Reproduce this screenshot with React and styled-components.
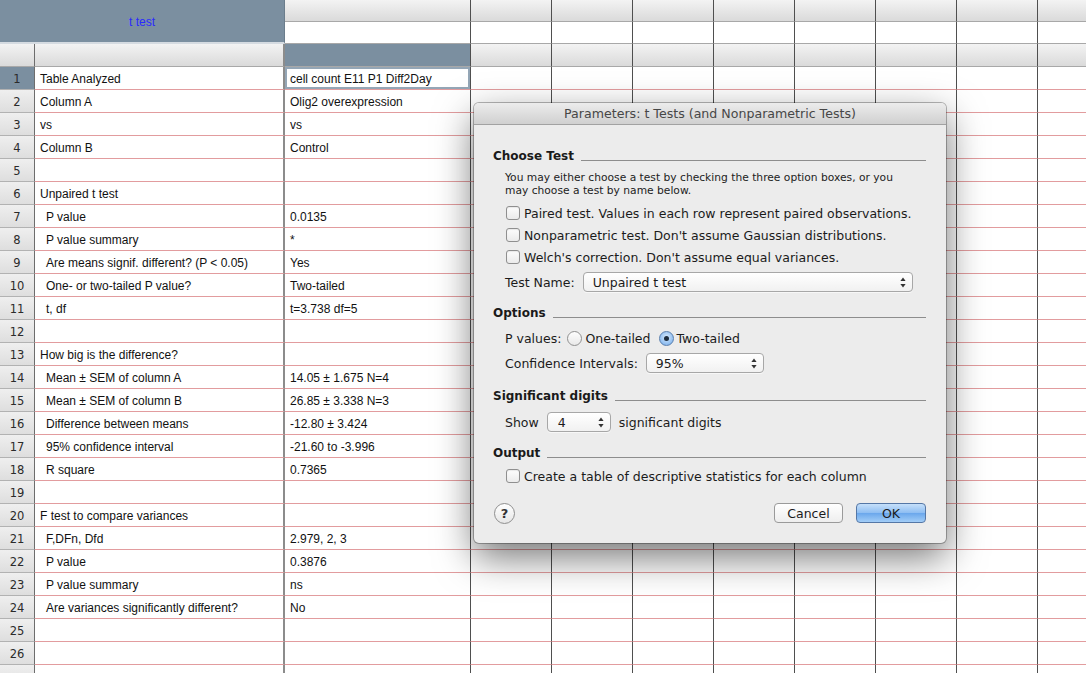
import React from 'react'
import styled, { createGlobalStyle } from 'styled-components'

const GlobalStyle = createGlobalStyle`
  html, body {
    margin: 0;
    padding: 0;
    background: #fff;
  }
  body {
    font-family: 'Liberation Sans', Arial, sans-serif;
  }
`

const results = [
  ['Table Analyzed', 'cell count E11 P1 Diff2Day'],
  ['Column A', 'Olig2 overexpression'],
  ['vs', 'vs'],
  ['Column B', 'Control'],
  ['', ''],
  ['Unpaired t test', ''],
  ['P value', '0.0135', true],
  ['P value summary', '*', true],
  ['Are means signif. different? (P < 0.05)', 'Yes', true],
  ['One- or two-tailed P value?', 'Two-tailed', true],
  ['t, df', 't=3.738 df=5', true],
  ['', ''],
  ['How big is the difference?', ''],
  ['Mean ± SEM of column A', '14.05 ± 1.675 N=4', true],
  ['Mean ± SEM of column B', '26.85 ± 3.338 N=3', true],
  ['Difference between means', '-12.80 ± 3.424', true],
  ['95% confidence interval', '-21.60 to -3.996', true],
  ['R square', '0.7365', true],
  ['', ''],
  ['F test to compare variances', ''],
  ['F,DFn, Dfd', '2.979, 2, 3', true],
  ['P value', '0.3876', true],
  ['P value summary', 'ns', true],
  ['Are variances significantly different?', 'No', true],
  ['', ''],
  ['', ''],
  ['', ''],
]

const EXTRA_COLS = 8
const VISIBLE_NUMBERS = 26
const slate = '#7b8fa0'
const grayHead = 'linear-gradient(#f3f3f3, #dadada)'

const colLine = (col) =>
  col === 0 ? '1px solid #6d6d6d' : col === 1 ? '2px solid #8c8c8c' : '1px solid #4f4f4f'

const Page = styled.div`
  position: relative;
  width: 1086px;
  height: 673px;
  overflow: hidden;
`

const Sheet = styled.div`
  display: grid;
  grid-template-columns: 35px 250px 186px repeat(${EXTRA_COLS}, 81px);
  grid-template-rows: 22px 22px 23px;
  grid-auto-rows: 23px;
  width: 1086px;
  height: 673px;
  overflow: hidden;
`

const TitleCell = styled.div`
  grid-column: 1 / span 2;
  grid-row: 1 / span 2;
  box-sizing: border-box;
  background: ${slate};
  border-bottom: 2px solid #d5dbe1;
  border-right: 1px solid #6b7d8c;
  display: flex;
  align-items: center;
  justify-content: center;
  padding-top: 2px;
  color: #2a2aff;
  font-size: 12px;
`

const HeadCell = styled.div`
  box-sizing: border-box;
  background: ${(p) => (p.$tone === 'white' ? '#fff' : p.$tone === 'slate' ? slate : grayHead)};
  border-right: ${(p) => colLine(p.$col)};
  border-bottom: 1px solid #a8a8a8;
`

const RowNum = styled.div`
  box-sizing: border-box;
  background: ${(p) => (p.$active ? slate : 'linear-gradient(#efefef, #dedede)')};
  border-right: ${colLine(0)};
  border-bottom: 1px solid #b2b2b2;
  display: flex;
  align-items: center;
  justify-content: center;
  font-family: 'DejaVu Sans', sans-serif;
  font-size: 11.5px;
  color: #2b2b2b;
  padding-top: 2px;
`

const Cell = styled.div`
  box-sizing: border-box;
  background: #fff;
  border-right: ${(p) => colLine(p.$col)};
  border-bottom: 1px solid #e29c9e;
  display: flex;
  align-items: center;
  padding-left: ${(p) => (p.$indent ? 11 : 5)}px;
  padding-top: 1px;
  font-size: 12px;
  color: #111;
  white-space: nowrap;
  overflow: hidden;
  box-shadow: ${(p) => (p.$selected ? 'inset 0 0 0 2px #94a6b6' : 'none')};
`

const Dialog = styled.div`
  position: absolute;
  left: 474px;
  top: 103px;
  width: 472px;
  height: 440px;
  box-sizing: border-box;
  background: #ececec;
  border-radius: 5px;
  box-shadow: 0 0 0 1px rgba(0, 0, 0, 0.28), 0 14px 38px rgba(0, 0, 0, 0.55);
  display: flex;
  flex-direction: column;
  overflow: hidden;
  font-family: 'DejaVu Sans', sans-serif;
  font-size: 12.5px;
  color: #1b1b1b;
`

const TitleBar = styled.div`
  flex: none;
  height: 21px;
  background: linear-gradient(#ececec, #d0d0d0);
  border-bottom: 1px solid #a2a2a2;
  display: flex;
  align-items: center;
  justify-content: center;
  color: #474747;
  font-size: 12.6px;
`

const Body = styled.div`
  display: flex;
  flex-direction: column;
  padding: 22px 20px 0 19px;
`

const SectionHead = styled.div`
  display: flex;
  align-items: center;
  gap: 7px;
  height: 18px;
  margin-top: ${(p) => p.$gap || 0}px;
  font-size: 12px;
  font-weight: bold;
  color: #1a1a1a;
  &::after {
    content: '';
    flex: 1;
    height: 1px;
    margin-top: 8px;
    background: #8d8d8d;
  }
`

const Note = styled.p`
  margin: 6px 0 0;
  padding-left: 12px;
  font-size: 10.7px;
  line-height: 13px;
  color: #222;
`

const Row = styled.div`
  display: flex;
  align-items: center;
  height: 22px;
  margin-top: ${(p) => p.$gap || 0}px;
  padding-left: 12px;
  gap: ${(p) => p.$spacing ?? 8}px;
`

const Check = styled.span`
  display: inline-block;
  width: 14px;
  height: 14px;
  box-sizing: border-box;
  border: 1px solid #8f8f8f;
  border-radius: 3px;
  background: linear-gradient(#fdfdfd, #ebebeb);
  box-shadow: inset 0 1px 1px rgba(0, 0, 0, 0.08);
`

const CheckLabel = styled.label`
  display: flex;
  align-items: center;
  gap: 4px;
  margin-left: 1px;
`

const Radio = styled.span`
  width: 15px;
  height: 15px;
  box-sizing: border-box;
  border-radius: 50%;
  border: 1px solid ${(p) => (p.$on ? '#5a7fae' : '#909090')};
  background: ${(p) =>
    p.$on ? 'radial-gradient(circle at 50% 40%, #d6e9fb, #8fbdf0 70%, #6ea3e0)' : 'linear-gradient(#fdfdfd, #e9e9e9)'};
  display: inline-flex;
  align-items: center;
  justify-content: center;
  &::after {
    content: '';
    display: ${(p) => (p.$on ? 'block' : 'none')};
    width: 5px;
    height: 5px;
    border-radius: 50%;
    background: #1d2c3d;
  }
`

const RadioLabel = styled.label`
  display: flex;
  align-items: center;
  gap: 3px;
  margin-left: ${(p) => p.$ml || 0}px;
`

const Select = styled.div`
  position: relative;
  width: ${(p) => p.$w}px;
  height: 20px;
  box-sizing: border-box;
  border: 1px solid #a7a7a7;
  border-radius: 4px;
  background: linear-gradient(#ffffff, #f1f1f1);
  box-shadow: 0 1px 0 rgba(255, 255, 255, 0.6);
  display: flex;
  align-items: center;
  padding-left: ${(p) => p.$pad ?? 9}px;
  color: #1b1b1b;
`

const Arrows = styled.svg`
  position: absolute;
  right: 6px;
  top: 4px;
`

const Footer = styled.div`
  display: flex;
  align-items: center;
  margin-top: 15px;
  height: 22px;
  margin-left: 1px;
`

const HelpButton = styled.span`
  width: 21px;
  height: 21px;
  box-sizing: border-box;
  border-radius: 50%;
  border: 1px solid #8e8e8e;
  background: linear-gradient(#ffffff, #e6e6e6);
  display: flex;
  align-items: center;
  justify-content: center;
  font-weight: bold;
  font-size: 13px;
  color: #333;
`

const Button = styled.button`
  width: ${(p) => p.$w}px;
  height: 20px;
  margin-left: ${(p) => p.$ml || 0}px;
  box-sizing: border-box;
  border-radius: 4px;
  font-family: 'DejaVu Sans', sans-serif;
  font-size: 12.5px;
  color: #1b1b1b;
  padding: 0;
  border: 1px solid ${(p) => (p.$primary ? '#5577a6' : '#9a9a9a')};
  background: ${(p) =>
    p.$primary ? 'linear-gradient(#c6e0fa, #8dbdf2 50%, #6aa7ec 51%, #a2cdf7)' : 'linear-gradient(#ffffff, #eeeeee)'};
`

const Spacer = styled.div`
  flex: 1;
`

function SelectArrows() {
  return (
    <Arrows width="6" height="11" viewBox="0 0 6 11">
      <path d="M3 0.5 L5.6 4 L0.4 4 Z" fill="#333" />
      <path d="M3 10.5 L5.6 7 L0.4 7 Z" fill="#333" />
    </Arrows>
  )
}

function Spreadsheet() {
  const extra = Array.from({ length: EXTRA_COLS }, (_, i) => i + 3)
  return (
    <Sheet>
      <TitleCell>t test</TitleCell>
      <HeadCell $col={2} />
      {extra.map((c) => (
        <HeadCell key={'a' + c} $col={c} />
      ))}
      <HeadCell $col={2} $tone="white" />
      {extra.map((c) => (
        <HeadCell key={'b' + c} $col={c} $tone="white" />
      ))}
      <HeadCell $col={0} />
      <HeadCell $col={1} />
      <HeadCell $col={2} $tone="slate" />
      {extra.map((c) => (
        <HeadCell key={'c' + c} $col={c} />
      ))}
      {results.map(([label, value, indent], i) => (
        <React.Fragment key={i}>
          <RowNum $active={i === 0}>{i < VISIBLE_NUMBERS ? i + 1 : ''}</RowNum>
          <Cell $col={1} $indent={indent}>
            {label}
          </Cell>
          <Cell $col={2} $selected={i === 0}>
            {value}
          </Cell>
          {extra.map((c) => (
            <Cell key={c} $col={c} />
          ))}
        </React.Fragment>
      ))}
    </Sheet>
  )
}

function ParametersDialog() {
  return (
    <Dialog>
      <TitleBar>Parameters: t Tests (and Nonparametric Tests)</TitleBar>
      <Body>
        <SectionHead>Choose Test</SectionHead>
        <Note>
          You may either choose a test by checking the three option boxes, or you
          <br />
          may choose a test by name below.
        </Note>
        <Row $gap={5}>
          <CheckLabel>
            <Check />
            Paired test. Values in each row represent paired observations.
          </CheckLabel>
        </Row>
        <Row>
          <CheckLabel>
            <Check />
            Nonparametric test. Don't assume Gaussian distributions.
          </CheckLabel>
        </Row>
        <Row>
          <CheckLabel>
            <Check />
            Welch's correction. Don't assume equal variances.
          </CheckLabel>
        </Row>
        <Row $gap={3}>
          Test Name:
          <Select $w={330}>
            Unpaired t test
            <SelectArrows />
          </Select>
        </Row>

        <SectionHead $gap={11}>Options</SectionHead>
        <Row $gap={5} $spacing={6}>
          P values:
          <RadioLabel>
            <Radio />
            One-tailed
          </RadioLabel>
          <RadioLabel $ml={2}>
            <Radio $on />
            Two-tailed
          </RadioLabel>
        </Row>
        <Row $gap={3}>
          Confidence Intervals:
          <Select $w={118}>
            95%
            <SelectArrows />
          </Select>
        </Row>

        <SectionHead $gap={13}>Significant digits</SectionHead>
        <Row $gap={6}>
          Show
          <Select $w={64} $pad={10}>
            4
            <SelectArrows />
          </Select>
          significant digits
        </Row>

        <SectionHead $gap={11}>Output</SectionHead>
        <Row $gap={3}>
          <CheckLabel>
            <Check />
            Create a table of descriptive statistics for each column
          </CheckLabel>
        </Row>

        <Footer>
          <HelpButton>?</HelpButton>
          <Spacer />
          <Button $w={69}>Cancel</Button>
          <Button $w={70} $ml={13} $primary>
            OK
          </Button>
        </Footer>
      </Body>
    </Dialog>
  )
}

export default function App() {
  return (
    <Page>
      <GlobalStyle />
      <Spreadsheet />
      <ParametersDialog />
    </Page>
  )
}
